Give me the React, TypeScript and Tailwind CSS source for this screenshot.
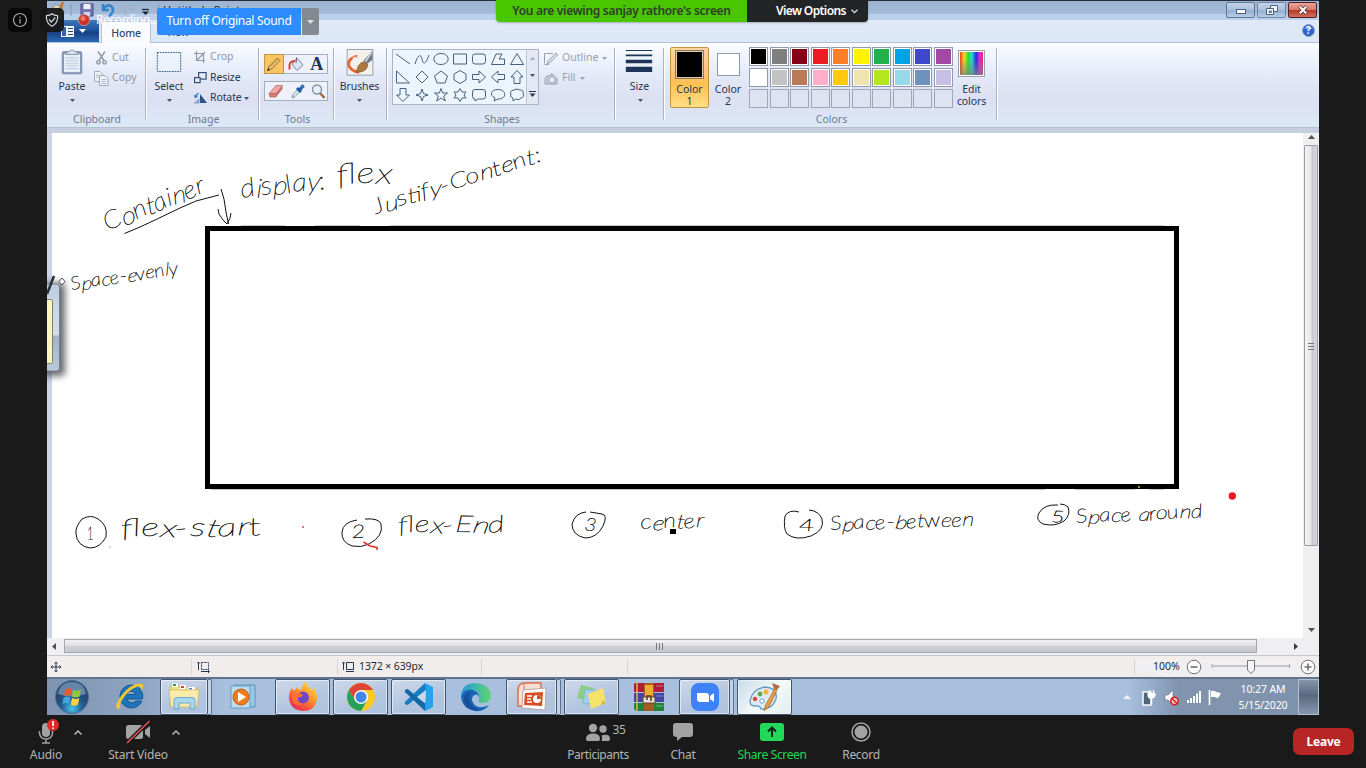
import React from "react";

const INK = "#111111";

/* ---------- ribbon helpers ---------- */

function Group({ label, className, children }: { label: string; className: string; children: React.ReactNode }) {
  return (
    <section className={`relative flex h-full shrink-0 flex-col ${className}`}>
      <div className="flex h-[68px] shrink-0">{children}</div>
      <div className="h-4 whitespace-nowrap text-center text-[10.5px] leading-4 text-[#6b7a93]">{label}</div>
      <div className="absolute right-0 top-[5px] h-[72px] w-[2px] border-l border-[#a9b3c6] bg-white" />
    </section>
  );
}

function Down({ color = "#44546e" }: { color?: string }) {
  return (
    <svg width="5" height="3" viewBox="0 0 5 3" className="shrink-0">
      <path d="M0 0H5L2.5 3Z" fill={color} />
    </svg>
  );
}

function PasteIcon() {
  return (
    <svg width="24" height="30" viewBox="0 0 24 30">
      <rect x="1" y="3" width="22" height="25" rx="1.5" fill="#8a9cba" stroke="#7386a6" />
      <rect x="3" y="6" width="18" height="20" fill="#e6edf7" />
      <path d="M5 10H19M5 13H19M5 16H19M5 19H19M5 22H19" stroke="#b7c6dc" />
      <path d="M6 3H9Q12-1 15 3H18V6H6Z" fill="#dfe6f0" stroke="#77879f" />
    </svg>
  );
}

function CutIcon() {
  return (
    <svg width="11" height="14" viewBox="0 0 11 14" fill="none" stroke="#8f98a8" strokeWidth="1.4">
      <path d="M2 0.5L8 9.5M9 0.5L3 9.5" />
      <circle cx="2.5" cy="11.3" r="1.7" />
      <circle cx="8.5" cy="11.3" r="1.7" />
    </svg>
  );
}

function CopyIcon() {
  return (
    <svg width="15" height="15" viewBox="0 0 15 15" fill="#eef1f8" stroke="#a3acbd">
      <path d="M0.5 0.5H6L8.5 3V10.5H0.5Z" />
      <path d="M5.5 4.5H11L14 7.5V14.5H5.5Z" />
      <path d="M2 4H5M2 6H5M7.5 8.5H12M7.5 10.5H12M7.5 12.5H12" stroke="#b5bccb" />
    </svg>
  );
}

function CropIcon() {
  return (
    <svg width="12" height="12" viewBox="0 0 12 12" fill="none" stroke="#8f98a8" strokeWidth="1.2">
      <path d="M2.5 0V9.5H11M0 2.5H9.5V12M2.5 9.5L11 1" />
    </svg>
  );
}

function ResizeIcon() {
  return (
    <svg width="13" height="12" viewBox="0 0 13 12" fill="#e8eef8" stroke="#2f4f7c" strokeWidth="1.2">
      <rect x="4.6" y="0.6" width="7.5" height="6.5" />
      <rect x="0.6" y="5.6" width="5.5" height="5" />
    </svg>
  );
}

function RotateIcon() {
  return (
    <svg width="14" height="12" viewBox="0 0 14 12">
      <path d="M6 11V2L13 11Z" fill="#2c5484" />
      <path d="M5 11V7L0.5 11Z" fill="#9bb6d8" stroke="#5d82b0" strokeWidth="0.6" />
      <path d="M1.5 5Q2 1.5 5 1.5M0 3L1.5 5.5L3.5 3.5" fill="none" stroke="#2a7bc8" strokeWidth="1.1" />
    </svg>
  );
}

function PencilIcon() {
  return (
    <svg width="16" height="16" viewBox="0 0 16 16">
      <path d="M1.5 14.5L3 10.5L11.5 2L14 4.5L5.5 13Z" fill="#f8d070" stroke="#6f5a33" strokeWidth="0.9" />
      <path d="M4 11.5L12.5 3" stroke="#b9852b" />
      <path d="M1 15L2.3 12L4 13.7Z" fill="#333" />
    </svg>
  );
}

function BucketIcon() {
  return (
    <svg width="16" height="15" viewBox="0 0 16 15">
      <path d="M5 5L9.5 1.5L15 8L9 13.5L4.5 8Z" fill="#dce5ef" stroke="#77879a" />
      <path d="M8 6L8.5 0.5" stroke="#556" />
      <path d="M7 4Q2 4 1.5 8V12.5" fill="none" stroke="#d8432e" strokeWidth="2" />
    </svg>
  );
}

function EraserIcon() {
  return (
    <svg width="16" height="14" viewBox="0 0 16 14">
      <path d="M1 9.5L8 1.5H14.5L8 9.5Z" fill="#f1a9a5" stroke="#a8625f" strokeWidth="0.7" />
      <path d="M1 9.5H8V13H2Z" fill="#dc7b78" stroke="#a8625f" strokeWidth="0.7" />
      <path d="M8 9.5L14.5 1.5V5L8 13Z" fill="#c96a69" />
    </svg>
  );
}

function DropperIcon() {
  return (
    <svg width="14" height="15" viewBox="0 0 14 15">
      <path d="M1 14L2 10.5L7.5 5L9.5 7L4 12.5Z" fill="#dcecf8" stroke="#70849c" strokeWidth="0.9" />
      <path d="M6 4L10 8M8.5 6L12 2" stroke="#1f5ba0" strokeWidth="3" />
      <circle cx="11.5" cy="2.5" r="2" fill="#2f76be" />
    </svg>
  );
}

function LensIcon() {
  return (
    <svg width="15" height="15" viewBox="0 0 15 15">
      <path d="M9 9L13.5 14" stroke="#9a6a48" strokeWidth="2.4" />
      <circle cx="6" cy="5.5" r="4.5" fill="#e5f0fb" stroke="#8490a0" strokeWidth="1.4" />
    </svg>
  );
}

function BrushIcon() {
  return (
    <svg width="30" height="30" viewBox="0 0 30 30">
      <rect x="0.5" y="0.5" width="29" height="29" fill="#f3f1ee" stroke="#8c96a4" />
      <path d="M6 10Q0 15 3 20T14 26.5" fill="none" stroke="#ea6233" strokeWidth="3" />
      <path d="M5 11.5Q8 7.500 11 7.500V9.500" fill="none" stroke="#ea6233" strokeWidth="1.5" />
      <path d="M29 2V12L23 17L19 13Z" fill="#727b86" />
      <path d="M28 4L21 14" stroke="#cfd4da" strokeWidth="2" />
      <path d="M11 26Q12 16 20 14L24 18Q22 27 11 26Z" fill="#ad7740" stroke="#7e4d22" strokeWidth="0.7" />
    </svg>
  );
}

const SHAPES = [
  "M1 2L15 12",
  "M1 12C4 2 7 2 8 7S11 14 15 3",
  "M8 1.5C17.5 1.5 17.5 12.5 8 12.5S-1.5 1.5 8 1.5Z",
  "M1.5 2H14.5V12H1.5Z",
  "M4 2H12Q14.5 2 14.5 4.5V9.5Q14.5 12 12 12H4Q1.5 12 1.5 9.5V4.5Q1.5 2 4 2Z",
  "M1.5 12.5L6 2H12L9 7H14.5V12.5Z",
  "M8 1.5L14.5 12.5H1.5Z",
  "M1.5 1V13H14.5Z",
  "M8 1L14 7L8 13L2 7Z",
  "M8 1L14.5 6L12 13H4L1.5 6Z",
  "M8 0.5L14 4V10L8 13.5L2 10V4Z",
  "M1.5 4.5H8V1L14.5 7L8 13V9.5H1.5Z",
  "M14.5 4.5H8V1L1.5 7L8 13V9.5H14.5Z",
  "M8 0.5L14 7H11V13.5H5V7H2Z",
  "M8 13.5L14.5 7H11V0.5H5V7H1.5Z",
  "M8 1L9.5 5.5L14 7L9.5 8.5L8 13L6.5 8.5L2 7L6.5 5.5Z",
  "M8 0.5L9.6 5H14.5L10.7 8L12.3 13L8 10L3.7 13L5.3 8L1.5 5H6.4Z",
  "M8 0.5L10 4H14L12 7L14 10H10L8 13.5L6 10H2L4 7L2 4H6Z",
  "M4 1.5H12Q14.5 1.5 14.5 4V8.5Q14.5 11 12 11H7L4 13V11Q1.5 11 1.5 8.5V4Q1.5 1.5 4 1.5Z",
  "M8 1.5C17 1.5 17 11 8 11L4 13L5 10C-1 7 1 1.5 8 1.5Z",
  "M5 2Q8 0 11 2Q15 2 14 5Q16 9 12 10Q10 13 7 11L4 13V10Q0 9 2 6Q0 3 5 2Z",
];

const PALETTE = [
  "bg-[#000000]", "bg-[#7f7f7f]", "bg-[#880015]", "bg-[#ed1c24]", "bg-[#ff7f27]",
  "bg-[#fff200]", "bg-[#22b14c]", "bg-[#00a2e8]", "bg-[#3f48cc]", "bg-[#a349a4]",
  "bg-[#ffffff]", "bg-[#c3c3c3]", "bg-[#b97a57]", "bg-[#ffaec9]", "bg-[#ffc90e]",
  "bg-[#efe4b0]", "bg-[#b5e61d]", "bg-[#99d9ea]", "bg-[#7092be]", "bg-[#c8bfe7]",
];

function Palette() {
  return (
    <div className="ml-[2px] mt-[4px] grid h-[60px] grid-cols-10 gap-x-[1.5px] gap-y-[2px]">
      {PALETTE.map((c) => (
        <div key={c} className="h-[19px] w-[19px] border border-[#9299a8] bg-white p-[1px]">
          <div className={`h-full w-full ${c}`} />
        </div>
      ))}
      {Array.from({ length: 10 }, (_, i) => (
        <div key={i} className="h-[19px] w-[19px] border border-[#a0a6b6] bg-[#dfe2f0]" />
      ))}
    </div>
  );
}

function Ribbon() {
  return (
    <div className="flex h-[85px] shrink-0 border-b border-[#b4bfd0] bg-[linear-gradient(#fafcff,#e5ebf8_35%,#dce0f2_65%,#dce8f6)]">
      <Group label="Clipboard" className="w-[100px]">
        <div className="ml-[9px] flex w-[32px] flex-col items-center pt-[6px] text-[10.5px] leading-4 text-[#26364f]">
          <PasteIcon />
          <span className="mt-[2px]">Paste</span>
          <span className="mt-[3px] flex h-4 items-start pt-[2px]"><Down /></span>
        </div>
        <div className="ml-[6px] flex flex-col pt-[5px] text-[10.5px] text-[#8d96a8]">
          <div className="flex h-5 items-center gap-[5px] pl-[2px]"><CutIcon />Cut</div>
          <div className="flex h-5 items-center gap-[3px]"><CopyIcon />Copy</div>
        </div>
      </Group>
      <Group label="Image" className="w-[113px]">
        <div className="ml-[6px] flex w-[32px] flex-col items-center pt-[9px] text-[10.5px] leading-4 text-[#26364f]">
          <svg width="28" height="23" viewBox="0 0 28 23"><rect x="0.5" y="0.5" width="27" height="22" fill="#ecf2fc" stroke="#1d4a77" strokeDasharray="2 1" /></svg>
          <span className="mt-[6px]">Select</span>
          <span className="mt-[3px] flex h-4 items-start pt-[2px]"><Down /></span>
        </div>
        <div className="ml-[9px] flex flex-col pt-[4px] text-[10.5px] text-[#26364f]">
          <div className="flex h-5 items-center gap-[4px] text-[#8d96a8]"><CropIcon />Crop</div>
          <div className="flex h-[21px] items-center gap-[3px] tracking-[-0.1px]"><ResizeIcon />Resize</div>
          <div className="flex h-5 items-center gap-[2px] tracking-[-0.1px]"><RotateIcon />Rotate<Down /></div>
        </div>
      </Group>
      <Group label="Tools" className="w-[75px]">
        <div className="ml-[4px] flex flex-col gap-[7px] pt-[11px]">
          <div className="flex h-5 w-16 border border-[#a5aebf] bg-[#eef1f9]">
            <div className="-m-px flex w-[21px] items-center justify-center border border-[#c29746] bg-[#fbc463]"><PencilIcon /></div>
            <div className="ml-[2px] flex w-[22px] items-center justify-center"><BucketIcon /></div>
            <div className="flex w-[21px] items-center justify-center font-['Liberation_Serif',serif] text-[18px] font-bold text-[#20344f]">A</div>
          </div>
          <div className="flex h-5 w-16 items-center justify-between border border-[#a5aebf] bg-[#eef1f9] pl-[3px] pr-px">
            <EraserIcon /><DropperIcon /><LensIcon />
          </div>
        </div>
      </Group>
      <Group label="" className="w-[53px]">
        <div className="flex w-[49px] flex-col items-center pt-[6px] text-[10.5px] leading-4 text-[#26364f]">
          <BrushIcon />
          <span className="mt-[2px] tracking-[-0.1px]">Brushes</span>
          <span className="mt-[3px] flex h-4 items-start pt-[2px]"><Down /></span>
        </div>
      </Group>
      <Group label="Shapes" className="w-[228px]">
        <div className="ml-[4px] mt-[6px] flex h-[56px] w-[147px] border border-[#a9b4c8] bg-[#edf5fc]">
          <div className="grid w-[133px] grid-cols-7 items-center">
            {SHAPES.map((d) => (
              <svg key={d} width="16" height="14" viewBox="0 0 16 14" fill="none" stroke="#3d5878" strokeWidth="0.95" className="ml-[2px]"><path d={d} /></svg>
            ))}
          </div>
          <div className="flex flex-1 flex-col items-center justify-around border-l border-[#bcc6d8] bg-[#e3e8f4]">
            <svg width="5" height="3" viewBox="0 0 5 3"><path d="M0 3H5L2.5 0Z" fill="#a5adbd" /></svg>
            <Down />
            <svg width="7" height="6" viewBox="0 0 7 6"><path d="M0 0.5H7" stroke="#2c3c56" /><path d="M0.5 2.5H6.5L3.5 6Z" fill="#2c3c56" /></svg>
          </div>
        </div>
        <div className="ml-[5px] flex flex-col pt-[5px] text-[10.5px] text-[#98a1b4]">
          <div className="flex h-5 items-center gap-[4px]">
            <svg width="14" height="13" viewBox="0 0 14 13" fill="none" stroke="#9aa2b2"><path d="M0.5 11.5V1.5H9M0.5 12.5H5" /><path d="M3 12L4.5 8.5L12 1L13.5 3L6 10.5Z" fill="#d9deea" /></svg>
            Outline<Down color="#98a1b4" />
          </div>
          <div className="flex h-5 items-center gap-[4px]">
            <svg width="14" height="13" viewBox="0 0 14 13" fill="#c4cad8" stroke="#9aa2b2"><path d="M1 12V7Q2 3 5 4L8 1.5L13 6.5V12Z" /><path d="M4 8L8 4L12 8L8 11.5Z" fill="#e6e9f2" /></svg>
            Fill<Down color="#98a1b4" />
          </div>
        </div>
      </Group>
      <Group label="" className="w-[49px]">
        <div className="flex w-[48px] flex-col items-center pt-[7px] text-[10.5px] leading-4 text-[#26364f]">
          <svg width="30" height="27" viewBox="0 0 30 27" fill="#1e3558" className="mr-[2px]"><path d="M0 0H30V1H0ZM0 5H30V7H0ZM0 11H30V15H0ZM0 19H30V25H0Z" /></svg>
          <span className="mr-px mt-[4px]">Size</span>
          <span className="mt-[3px] flex h-4 items-start pt-[2px]"><Down /></span>
        </div>
      </Group>
      <Group label="Colors" className="w-[333px]">
        <div className="ml-[5px] mt-[4px] flex h-[61px] w-[39px] shrink-0 flex-col items-center rounded-[2px] border border-[#c2923f] bg-[linear-gradient(#fbd6a0,#fcc573_45%,#fdc052_60%,#fedf86)] pt-[2px] text-[10.5px] leading-[12px] text-[#26364f]">
          <div className="h-[29px] w-[29px] border border-[#8d7660] bg-[#e4cba8] p-px"><div className="h-full w-full bg-black" /></div>
          <span className="mt-[4px]">Color</span>
          <span>1</span>
        </div>
        <div className="flex w-[38px] shrink-0 flex-col items-center pt-[10px] text-[10.5px] leading-[12px] text-[#26364f]">
          <div className="h-[23px] w-[23px] border border-[#8f98a8] bg-white" />
          <span className="mt-[7px]">Color</span>
          <span>2</span>
        </div>
        <Palette />
        <div className="ml-[1px] flex w-[36px] flex-col items-center pt-[7px] text-[10.5px] leading-[12px] tracking-[-0.1px] text-[#26364f]">
          <div className="h-[27px] w-[27px] border border-[#9a9fae] bg-white p-px">
            <div className="h-full w-full bg-[linear-gradient(180deg,transparent_30%,rgba(128,128,128,.75)),linear-gradient(90deg,#f43b20,#f1dc20_18%,#22df2d_36%,#26d8df_52%,#2827df_70%,#ea26d9_86%,#f02460)]" />
          </div>
          <span className="mt-[6px]">Edit</span>
          <span>colors</span>
        </div>
      </Group>
    </div>
  );
}

/* ---------- title bar and tabs ---------- */

function TitleBar() {
  return (
    <div className="flex h-5 shrink-0 items-start border-t border-[#252b3c] bg-[linear-gradient(#9db5d3,#a3bad6_65%,#b9cfea_70%,#bcd0ec)] pl-[2px]">
      <svg width="114" height="19" viewBox="49 1 114 19" className="shrink-0">
        <path d="M50 14L55 4L62 7L64 14Z" fill="#ddd2bb" stroke="#8a8f9c" /><path d="M58 14L63 2" stroke="#c57425" strokeWidth="2.5" />
        <path d="M71 4V16" stroke="#8696b4" />
        <path d="M81 4H93V16H81Z" fill="#7975b8" stroke="#484a87" /><path d="M83.5 4H90.5V9H83.5Z" fill="#eef0fa" /><path d="M84 12H90V16H84Z" fill="#d3d5ee" />
        <path d="M103 4V10H109M103.5 9Q108 3 112 7Q115 12 109 16" fill="none" stroke="#3585cd" strokeWidth="2.6" />
        <path d="M134 4V9H128M133 8Q129 4 125 7Q121 11 127 15" fill="none" stroke="#a5b2ca" strokeWidth="2.2" />
        <path d="M142 9.5H149" stroke="#1d2636" strokeWidth="1.3" /><path d="M142 11.5H149L145.5 15Z" fill="#1d2636" />
        <path d="M158.5 4V16" stroke="#8696b4" />
      </svg>
      <span className="whitespace-nowrap text-[11px] leading-[18px] text-[#222b3c]">Untitled - Paint</span>
      <div className="ml-auto mr-[2px] mt-[1px] flex gap-[2px]">
        <div className="flex h-4 w-[29px] items-center justify-center rounded-[2px] border border-[#5f7596] bg-[linear-gradient(#c3d4e8,#a9bfdb_50%,#94afd0_52%,#b6cbe4)]">
          <div className="mt-[3px] h-[5px] w-[10px] border border-[#4f617c] bg-white" />
        </div>
        <div className="flex h-4 w-[29px] items-center justify-center rounded-[2px] border border-[#7187a7] bg-[linear-gradient(#c3d4e8,#a9bfdb_50%,#94afd0_52%,#b6cbe4)]">
          <svg width="12" height="10" viewBox="0 0 12 10" fill="#eef3f9" stroke="#4f617c"><path d="M4.5 0.5H11.5V6.5H4.5Z" /><path d="M0.5 3.5H7.5V9.5H0.5Z" /><path d="M3 6H5.5V7.5H3Z" fill="#9cb3cf" strokeWidth="0.8" /></svg>
        </div>
        <div className="flex h-4 w-[29px] items-center justify-center rounded-[2px] border border-[#521f27] bg-[linear-gradient(#e9a69b,#d9796b_48%,#b63a26_52%,#d3705f)]">
          <svg width="12" height="10" viewBox="0 0 12 10"><path d="M2.5 1.5L9.5 8.5M9.5 1.5L2.5 8.5" stroke="#5c2b2b" strokeWidth="3.6" /><path d="M2.8 1.8L9.2 8.2M9.2 1.8L2.8 8.2" stroke="#fff" strokeWidth="2.1" /></svg>
        </div>
      </div>
    </div>
  );
}

function TabRow() {
  return (
    <div className="flex h-[23px] shrink-0 border-b border-[#b2c0d6] bg-[linear-gradient(#e0e8f7,#dce8f7)]">
      <div className="flex h-[22px] w-[52px] items-center justify-center gap-[5px] bg-[linear-gradient(#3e78bb,#1f4f97_50%,#173f83_55%,#2c69b0)]">
        <svg width="13" height="11" viewBox="0 0 13 11"><path d="M0 0H13V11H0Z" fill="#f3f7fc" /><path d="M1 1H5V10H1Z" fill="#33649f" /><path d="M7 2.5H12M7 5.5H12M7 8.5H12" stroke="#27466e" /></svg>
        <svg width="7" height="4" viewBox="0 0 7 4"><path d="M0 0H7L3.5 4Z" fill="#fff" /></svg>
      </div>
      <div className="ml-[2px] mt-[1px] flex h-[22px] w-[50px] items-center justify-center rounded-t-[3px] border border-b-0 border-[#b6c2d8] bg-[#f9fbff] pt-[2px] text-[10.5px] font-medium tracking-[-0.15px] text-[#30496d]">Home</div>
      <div className="flex h-[23px] w-[53px] items-center justify-center pt-[3px] text-[10.5px] text-[#30496d]">View</div>
      <svg width="13" height="13" viewBox="0 0 13 13" className="ml-auto mr-[4px] mt-[4px]">
        <circle cx="6.5" cy="6.5" r="5.9" fill="#2962cf" stroke="#8796b4" />
        <path d="M2 5Q6 0 11 5Z" fill="#7ca8ee" />
        <text x="6.5" y="10" fontSize="10" fontWeight="700" fill="#fff" textAnchor="middle">?</text>
      </svg>
    </div>
  );
}

/* ---------- the drawing on the canvas ---------- */

type Note = { t: string; x: number; y: number; w: number; a: number; s: number };

const NOTES: Note[] = [
  { t: "Container", x: 108, y: 231, w: 106, a: -22, s: 25 },
  { t: "display:", x: 242, y: 198, w: 85, a: -7, s: 26 },
  { t: "flex", x: 338, y: 185, w: 54, a: -3, s: 29 },
  { t: "Justify-Content:", x: 376, y: 214, w: 175, a: -18, s: 21 },
  { t: "Space-evenly", x: 72, y: 290, w: 108, a: -9, s: 18 },
  { t: "flex-start", x: 122, y: 537, w: 141, a: -1, s: 25 },
  { t: "flex-End", x: 399, y: 533, w: 106, a: -1, s: 23 },
  { t: "center", x: 641, y: 529, w: 63, a: -2, s: 20 },
  { t: "Space-between", x: 831, y: 530, w: 143, a: -2, s: 19 },
  { t: "Space around", x: 1077, y: 523, w: 126, a: -3, s: 19 },
  { t: "1", x: 87, y: 540, w: 7, a: 0, s: 18 },
  { t: "2", x: 352, y: 538, w: 14, a: 0, s: 18 },
  { t: "3", x: 584, y: 530, w: 12, a: 12, s: 18 },
  { t: "4", x: 799, y: 531, w: 16, a: 3, s: 17 },
  { t: "5", x: 1051, y: 522, w: 14, a: 5, s: 16 },
];

// Uneven letter angles and baselines, so that the notes read as quick pen writing.
const TILT = [-5, 7, -3, 5, -8, 3, 9, -4, 2, -6, 6, -2, 4, -5, 3, 0];
const BOB = [0, 1.2, -1.6, 0.9, 0.7, -1.4, 0.8, 0.6, -1.1, 0.9, -0.7, 1, -1.2, 0.6, 0.4, -0.5];

function Canvas() {
  return (
    <svg width="1256" height="505" viewBox="47 133 1256 505" className="shrink-0 bg-white">
      <defs>
        <linearGradient id="glass" x1="0" y1="0" x2="0" y2="1">
          <stop offset="0" stopColor="#bdcedf" /><stop offset="0.58" stopColor="#d4deea" /><stop offset="0.6" stopColor="#9fb3c7" /><stop offset="1" stopColor="#bacbdc" />
        </linearGradient>
        <filter id="soft" x="-100%" y="-20%" width="300%" height="140%"><feGaussianBlur stdDeviation="3.5" /></filter>
      </defs>
      <rect x="47" y="133" width="5" height="505" fill="#cdd2e5" />
      <rect x="40" y="283" width="25" height="93" rx="4" fill="#33363c" opacity="0.75" filter="url(#soft)" />
      <rect x="38" y="284" width="21.5" height="87" rx="3" fill="url(#glass)" stroke="#6e8092" />
      <rect x="40" y="299.5" width="12.5" height="64" rx="2" fill="#fbf5bd" stroke="#7d7e68" />
      <path d="M47 294L54 276" stroke="#293040" strokeWidth="2.5" />
      <path d="M62 278L65 281.5L62 285L59 281.5Z" fill="#fff" stroke="#222" strokeWidth="0.8" />

      <rect x="207.5" y="228.5" width="969" height="258" fill="none" stroke="#000" strokeWidth="5" />
      <path d="M211 489.5H1045M1075 489.5H1135M1149 489.5H1164" stroke="#c6c6c6" />
      <path d="M241 225.5H285M315 225.5H360M390 225.5H1164" stroke="#c9c9c9" />
      <rect x="1138" y="486" width="2" height="2" fill="#8f9137" />

      <g fill="none" stroke={INK} strokeWidth="1">
        <path d="M124.5 233.5L140 227L155 220L180 208L196 201L219 195" />
        <path d="M221 189L224 199L226 212L228.5 224M218 209L219 214L223 220L227 224L230 218L231 213" />
        <path d="M82 519Q91 514 98 519Q108 525 106 537Q100 548 90 548Q77 546 76 534Q75 527 82 519" />
        <path d="M357 520Q343 522 342 532Q341 542 352 546Q361 548 369 544Q384 536 381 524Q379 518 365 519" />
        <path d="M586 512Q575 513 572 524Q572 535 585 538Q597 538 603 526Q608 515 602 514L590 512" />
        <path d="M799 512Q789 509 785 516Q783 528 787 534Q796 541 811 536Q825 530 822 519Q819 511 809 510" />
        <path d="M1058 505Q1044 504 1039 513Q1035 520 1043 524Q1055 527 1064 521Q1071 515 1068 507Q1065 504 1060 504" />
      </g>
      {NOTES.map((n) => (
        <text
          key={n.t}
          transform={`translate(${n.x} ${n.y}) rotate(${n.a})`}
          fontSize={n.s}
          textLength={n.w}
          lengthAdjust="spacingAndGlyphs"
          rotate={TILT.slice(0, n.t.length).join(" ")}
          dy={BOB.slice(0, n.t.length).join(" ")}
          fill={INK}
          stroke={INK}
          strokeWidth="0.45"
          className="font-['Lato',sans-serif] font-thin italic"
        >
          {n.t}
        </text>
      ))}
      <rect x="670" y="529" width="6" height="5" fill="#000" />
      <path d="M363.5 542L370 546L377 547.5V550" fill="none" stroke="#e3322b" strokeWidth="1.6" />
      <circle cx="303" cy="527" r="1" fill="#d84d64" />
      <circle cx="110" cy="547" r="0.7" fill="#a88" />
      <circle cx="1232.3" cy="496" r="3.7" fill="#f3161b" />
    </svg>
  );
}

function VScroll() {
  return (
    <div className="flex w-4 shrink-0 flex-col items-center bg-[#efeff2]">
      <svg width="7" height="4" viewBox="0 0 7 4" className="mb-[6px] mt-[2px] shrink-0"><path d="M0 4H7L3.5 0Z" fill="#4c5059" /></svg>
      <div className="flex h-[401px] w-[14px] shrink-0 items-center justify-center rounded-[1px] border border-[#999ca3] bg-[linear-gradient(90deg,#f6f6f6,#e5e5e8_50%,#cacbd0_60%,#d6d7dc)]">
        <svg width="6" height="8" viewBox="0 0 6 8"><path d="M0 1.5H6M0 4.5H6M0 7.5H6" stroke="#747983" /></svg>
      </div>
      <svg width="7" height="4" viewBox="0 0 7 4" className="mb-[6px] mt-auto"><path d="M0 0H7L3.5 4Z" fill="#4c5059" /></svg>
    </div>
  );
}

function HScroll() {
  return (
    <div className="flex h-[17px] shrink-0 items-center bg-[#efeff1] pb-px pl-[5px]">
      <svg width="4" height="7" viewBox="0 0 4 7" className="mr-[8px]"><path d="M4 0V7L0 3.5Z" fill="#4c5059" /></svg>
      <div className="flex h-[14px] w-[1193px] items-center justify-center border border-[#a5a7ad] bg-[linear-gradient(#f1f1f3,#e3e3e6_45%,#cfcfd4_50%,#c8c9cf)]">
        <svg width="8" height="7" viewBox="0 0 8 7" className="mr-[3px]"><path d="M1.5 0V7M4.5 0V7M7.5 0V7" stroke="#747983" /></svg>
      </div>
      <svg width="4" height="7" viewBox="0 0 4 7" className="ml-[37px]"><path d="M0 0V7L4 3.5Z" fill="#333b47" /></svg>
    </div>
  );
}

function StatusBar() {
  return (
    <div className="flex h-[22px] shrink-0 items-center border-t border-[#c6c8ce] bg-[#f2eded] text-[10.5px] text-[#222831]">
      <div className="flex h-4 w-[145px] items-center border-r border-[#d8d5d8] pl-[3px]">
        <svg width="12" height="12" viewBox="0 0 12 12" fill="none" stroke="#27364e" strokeWidth="1"><path d="M6 1V11M1 6H11M4.5 2.5L6 1L7.5 2.5M4.5 9.5L6 11L7.5 9.5M2.5 4.5L1 6L2.5 7.5M9.5 4.5L11 6L9.5 7.5" /></svg>
      </div>
      <div className="flex h-4 w-[146px] items-center border-r border-[#d8d5d8] pl-[5px]">
        <svg width="14" height="12" viewBox="0 0 14 12" fill="none" stroke="#27364e"><path d="M1.5 9V1M0 2.5L1.5 1L3 2.5" /><path d="M4.5 1.5H11.5V8.5H4.5Z" strokeDasharray="2 1" /><path d="M4 10.5H12M11 9L12.5 10.5L11 12" /></svg>
      </div>
      <div className="flex h-4 w-[144px] items-center gap-[4px] border-r border-[#d8d5d8] pl-[4px]">
        <svg width="13" height="12" viewBox="0 0 13 12" fill="none" stroke="#27364e"><path d="M1.5 9V1M0 2.5L1.5 1L3 2.5M4.5 1.5H11.5V8.5H4.5ZM4 10.5H12" /></svg>
        <span className="whitespace-nowrap tracking-[-0.1px]">1372 × 639px</span>
      </div>
      <div className="h-4 w-[146px] border-r border-[#d8d5d8]" />
      <div className="h-4 w-[507px] border-r border-[#d8d5d8]" />
      <div className="flex flex-1 items-center bg-[#efeff2] pl-[18px]">
        <span className="w-[33px]">100%</span>
        <svg width="16" height="16" viewBox="0 0 16 16" fill="#fafafa" stroke="#6d7077"><circle cx="8" cy="8" r="6.8" /><path d="M4.5 8H11.5" strokeWidth="1.6" /></svg>
        <svg width="80" height="16" viewBox="0 0 80 16" className="ml-[9px]"><path d="M1 7H79" stroke="#999ba1" /><path d="M1 5V9M78.5 5V9" stroke="#aaa" /><path d="M36.5 1.5H43.5V11L40 14.5L36.5 11Z" fill="#f6f6f7" stroke="#71757d" /></svg>
        <svg width="16" height="16" viewBox="0 0 16 16" fill="#fafafa" stroke="#6d7077" className="ml-[9px] shrink-0"><circle cx="8" cy="8" r="6.8" /><path d="M4.5 8H11.5M8 4.5V11.5" strokeWidth="1.6" /></svg>
      </div>
    </div>
  );
}

/* ---------- taskbar ---------- */

function StartOrb() {
  return (
    <svg width="36" height="36" viewBox="0 0 36 36">
      <defs><radialGradient id="orb" cx="50%" cy="85%"><stop offset="0" stopColor="#48c3e8" /><stop offset="0.6" stopColor="#23639b" /><stop offset="1" stopColor="#244974" /></radialGradient></defs>
      <circle cx="18" cy="18" r="16.5" fill="url(#orb)" stroke="#51708f" />
      <path d="M4 15Q6 3 18 3T32 15Q18 20 4 15Z" fill="#9ab8d3" opacity="0.55" />
      <path d="M11 11Q14 8 17.5 10L16.5 17Q13 15 10 17Z" fill="#e75a28" />
      <path d="M19 10.5Q23 13 27 10.5L25.5 17.5Q22 19.5 18 17.5Z" fill="#8fc83f" />
      <path d="M9.5 18.5Q13 16.5 16.3 18.5L15 25Q12 23 8.5 25Z" fill="#46a4e0" />
      <path d="M18 19Q22 21 25.3 19L24 25.5Q20 28 16.8 25.5Z" fill="#ffd23e" />
    </svg>
  );
}

function IEIcon() {
  return (
    <svg width="32" height="32" viewBox="0 0 32 32">
      <path fillRule="evenodd" d="M17 4A11.5 11.5 0 1 0 28 20H21.5Q17 25 12.5 18H28.5A11.5 11.5 0 0 0 17 4ZM12.5 13.5Q17 6.5 21.5 13.5Z" fill="#1d74b8" stroke="#14598f" />
      <path d="M4 28Q-1 27 7 15Q17 2 27 2.5Q32 4 27 10Q29 5 24 5.5Q15 8 8 19Q4 26 7 27Z" fill="#f1c631" />
    </svg>
  );
}

function ExplorerIcon() {
  return (
    <svg width="32" height="30" viewBox="0 0 32 30">
      <path d="M2 4H11L13 6H29V23H2Z" fill="#f2dc83" stroke="#c8a94f" strokeWidth="0.7" />
      <path d="M4 1.5H10V5H4ZM12 3H18V7H12ZM20 5H27V8H20Z" fill="#fff" />
      <path d="M5 2H8V4H5Z" fill="#35a243" /><path d="M13 4H16V6H13Z" fill="#d6462e" /><path d="M21 6H24V7.5H21Z" fill="#3f8fce" />
      <path d="M1 8H31L29 25H3Z" fill="#faecaa" stroke="#d1b663" strokeWidth="0.7" />
      <path d="M6 27V18Q6 15.5 9 15.5H24Q27 15.5 27 18V27H22V21H11V27Z" fill="#a9d7ef" stroke="#579cc4" strokeWidth="0.8" />
    </svg>
  );
}

function MediaIcon() {
  return (
    <svg width="26" height="26" viewBox="0 0 26 26">
      <path d="M4 1H25V23H21Z" fill="#9ac9e7" stroke="#5b94bc" /><path d="M1 2H20V24H1Z" fill="#bcdcf0" stroke="#649bc3" />
      <circle cx="11" cy="13" r="8" fill="#ed7c1d" stroke="#d25e0d" /><path d="M8 8L16 13L8 18Z" fill="#fff" />
    </svg>
  );
}

function FirefoxIcon() {
  return (
    <svg width="30" height="30" viewBox="0 0 30 30">
      <defs><linearGradient id="ff" x1="1" y1="0" x2="0.3" y2="1"><stop offset="0" stopColor="#fff04a" /><stop offset="0.5" stopColor="#ff9329" /><stop offset="1" stopColor="#ed2753" /></linearGradient></defs>
      <path d="M18 0Q20 6 25 8L26 5Q29 10 29 16Q28 29 15 29Q2 28 1 16Q1 9 4 6L6 9L9 5Q10 8 13 8Q14 2 18 0Z" fill="url(#ff)" />
      <circle cx="15" cy="15.5" r="6" fill="#7047c9" /><path d="M4 13Q10 9 15 13Q13 16 10 15Q9 21 15 22Q9 25 5 20Z" fill="#ff7130" />
    </svg>
  );
}

function ChromeIcon() {
  return (
    <svg width="30" height="30" viewBox="0 0 30 30">
      <circle cx="15" cy="15" r="14" fill="#fbc928" />
      <path d="M2.9 8A14 14 0 0 1 27.1 8H15L9 18.5Z" fill="#df4537" />
      <path d="M2.9 8A14 14 0 0 0 15 29L21.1 18.5L15 15L9 18.5Z" fill="#27a159" />
      <circle cx="15" cy="15" r="7" fill="#f7f9f8" /><circle cx="15" cy="15" r="5.5" fill="#4285ea" />
    </svg>
  );
}

function CodeIcon() {
  return (
    <svg width="30" height="30" viewBox="0 0 30 30">
      <path d="M21 1L3 18Q0 20 1 22L3 23Q4 23 5 22L23 7Z" fill="#177cc0" />
      <path d="M21 29L3 12Q0 10 1 8L3 7Q4 7 5 8L23 23Z" fill="#1269a5" />
      <path d="M21 1L29 5V25L21 29V22L22 15V8Z" fill="#27a1eb" /><path d="M21 9V21L13 15Z" fill="#c6d8ed" />
    </svg>
  );
}

function EdgeIcon() {
  return (
    <svg width="32" height="30" viewBox="0 0 32 30">
      <defs><linearGradient id="ed"><stop offset="0" stopColor="#2598dd" /><stop offset="1" stopColor="#5ed671" /></linearGradient></defs>
      <path d="M1 14Q2 1 16 1Q29 2 31 13Q31 21 23 21Q17 21 19 17Q21 8 12 8Q4 8 1 14Z" fill="url(#ed)" />
      <path d="M1 14Q5 6 13 8Q20 10 19 16Q18 10 13 14Q10 19 16 24Q21 27 29 23Q24 30 15 29Q2 27 1 14Z" fill="#1766b4" />
      <path d="M4 20Q3 11 12 9Q8 13 9 18Q11 25 19 28Q9 30 4 20Z" fill="#1b4d98" />
    </svg>
  );
}

function PowerPointIcon() {
  return (
    <svg width="32" height="30" viewBox="0 0 32 30">
      <path d="M2 8Q2 1 9 1H25V19L18 24H2Z" fill="#f5dfd6" stroke="#db6b48" strokeWidth="1.4" /><path d="M8 2V22" stroke="#dd7858" />
      <path d="M7 8L30 6L29 28L6 26Z" fill="#fff" stroke="#b5a7a4" /><path d="M9 11L27 10L26 24L8 23Z" fill="#d64e24" />
      <path d="M11 14H16M11 17H15M11 20H16" stroke="#fff" strokeWidth="1.7" /><circle cx="21" cy="17" r="4" fill="#fff" /><path d="M21 17H25A4 4 0 0 0 21 13Z" fill="#d64e24" />
    </svg>
  );
}

function StickyIcon() {
  return (
    <svg width="32" height="28" viewBox="0 0 32 28">
      <path d="M5 2L18 5L14 19L1 15Z" fill="#8dce82" /><path d="M9 6L24 8L22 22L7 20Z" fill="#a1cfea" stroke="#76acd0" strokeWidth="0.6" />
      <path d="M12 11L27 5L30 20L15 26Z" fill="#f6e269" /><path d="M30 20L25 22L27 17Z" fill="#d3b83c" />
    </svg>
  );
}

function RarIcon() {
  return (
    <svg width="32" height="30" viewBox="0 0 32 30">
      <path d="M1 2Q1 1 3 1H31V10H1Z" fill="#b01e37" /><path d="M1 11H31V20H1Z" fill="#4546a4" /><path d="M1 21H31V29H3L1 27Z" fill="#23823a" />
      <path d="M4 1V10M4 11V20M4 21V29" stroke="#e7b731" strokeWidth="1.5" /><path d="M23 4H30M23 14H30M23 24H30" stroke="#fff" opacity="0.35" />
      <path d="M11 1H21V29H11Z" fill="#a65b22" /><path d="M12 3H20V15H12Z" fill="#efac2f" /><path d="M10 15H22V21H10Z" fill="#ece5d7" stroke="#604b37" /><path d="M14 18V14H18V19" fill="none" stroke="#5b4127" strokeWidth="1.6" />
    </svg>
  );
}

function ZoomIcon() {
  return (
    <svg width="28" height="30" viewBox="0 0 28 30">
      <rect x="0" y="1" width="28" height="28" rx="8" fill="#3f82f7" />
      <path d="M6 11H15Q18 11 18 14V20H9Q6 20 6 17Z" fill="#fff" /><path d="M19 14L23 11V20L19 17Z" fill="#fff" />
    </svg>
  );
}

function PaintIcon() {
  return (
    <svg width="34" height="32" viewBox="0 0 34 32">
      <path d="M2 20Q4 8 17 6Q30 7 28 18Q24 29 13 28Q12 24 7 25Q2 25 2 20Z" fill="#dfeaf4" stroke="#5f98be" strokeWidth="1.3" />
      <circle cx="7" cy="18" r="2.2" fill="#d94836" /><circle cx="12" cy="13" r="2.4" fill="#62a94d" /><circle cx="18" cy="11" r="2.5" fill="#efb530" /><circle cx="14" cy="20" r="2.2" fill="#fff" stroke="#67a2c9" />
      <path d="M16 30Q17 23 21 18L27 7L29 9L24 20Q21 27 16 30Z" fill="#e2a146" stroke="#a5632c" strokeWidth="0.7" /><path d="M24 2L32 5L29 9L26 8Z" fill="#ac6f49" />
    </svg>
  );
}

function Task({ className, frame = false, stack = false, active = false, children }: { className: string; frame?: boolean; stack?: boolean; active?: boolean; children: React.ReactNode }) {
  return (
    <div className={`flex h-[36px] shrink-0 ${className}`}>
      <div
        className={`flex flex-1 items-center justify-center rounded-[2px] ${
          frame ? "border border-[#41556f] shadow-[inset_0_0_0_1px_rgba(255,255,255,.55)]" : ""
        } ${active ? "bg-[linear-gradient(135deg,#c9dce8,#f3f9f9_55%,#dfeeed)]" : frame ? "bg-[linear-gradient(160deg,#ced9eb,#b2c5de_60%,#aec4df)]" : ""}`}
      >
        {children}
      </div>
      {stack && <div className="w-[4px] rounded-r-[2px] border border-l-0 border-[#5d7290] bg-[#c3d2e6]" />}
    </div>
  );
}

function Taskbar() {
  return (
    <div className="flex h-[38px] shrink-0 items-center border-t-2 border-[#61738d] bg-[linear-gradient(90deg,#7e93b0,#90a7c5_8%,#a8bfdd_14%,#a8bfdd_85%,#8094ae_89%,#7e92ab)]">
      <Task className="w-[50px]"><StartOrb /></Task>
      <Task className="ml-[8px] w-[50px]"><IEIcon /></Task>
      <Task className="ml-[5px] w-[52px]" frame stack><ExplorerIcon /></Task>
      <Task className="ml-[5px] w-[52px]"><MediaIcon /></Task>
      <Task className="ml-[6px] w-[55px]" frame><FirefoxIcon /></Task>
      <Task className="ml-[3px] w-[55px]" frame><ChromeIcon /></Task>
      <Task className="ml-[3px] w-[55px]" frame><CodeIcon /></Task>
      <Task className="ml-[3px] w-[54px]"><EdgeIcon /></Task>
      <Task className="ml-[3px] w-[55px]" frame stack><PowerPointIcon /></Task>
      <Task className="ml-[3px] w-[55px]" frame><StickyIcon /></Task>
      <Task className="ml-[3px] w-[54px]"><RarIcon /></Task>
      <Task className="ml-[3px] w-[55px]" frame stack><ZoomIcon /></Task>
      <Task className="ml-[3px] w-[55px]" frame active><PaintIcon /></Task>
      <div className="ml-auto flex h-full items-center">
        <svg width="104" height="20" viewBox="0 0 104 20" className="mr-[7px] mt-[2px]">
          <path d="M0 11H8L4 7Z" fill="#edf3f8" />
          <path d="M20 4H28V17H20Z" fill="#51647e" stroke="#f5f8fb" strokeWidth="1.6" /><path d="M26.5 2V6M30.5 2V6M28.5 10V16" fill="none" stroke="#fff" strokeWidth="1.4" /><path d="M24.5 5H32.500V8Q31 11 28.500 11Q25 11 24.500 8Z" fill="#fff" />
          <path d="M42 7H45L50 2V17L45 12H42Z" fill="#fff" stroke="#596a81" strokeWidth="0.6" /><circle cx="51.5" cy="13" r="3.7" fill="#f7c9c4" stroke="#d52022" strokeWidth="1.6" /><path d="M49 10.5L54 15.5" stroke="#d52022" strokeWidth="1.5" />
          <path d="M65 12V15M68 10V15M71 8V15M74 5.5V15M77 3V15" stroke="#fff" strokeWidth="2" />
          <path d="M86.5 2V17" stroke="#fff" strokeWidth="1.7" /><path d="M88 3Q92 2 93 4L98 5L96 9Q94 11 92 9H88Z" fill="#fff" />
        </svg>
        <div className="flex w-[58px] flex-col items-center whitespace-nowrap text-[10.5px] leading-4 tracking-[-0.1px] text-white">
          <span>10:27 AM</span><span>5/15/2020</span>
        </div>
        <div className="ml-[6px] h-[36px] w-[21px] border border-[#b2c0d1] bg-[linear-gradient(#8696aa,#59697f_45%,#8497ae)]" />
      </div>
    </div>
  );
}

/* ---------- meeting controls ---------- */

function MeetingBar() {
  return (
    <footer className="flex h-[53px] shrink-0 text-[12px] leading-4 tracking-[-0.3px] text-[#b5b5b5]">
      <div className="flex w-[92px] pl-[24px]">
        <div className="flex w-[44px] flex-col items-center pt-[4px]">
          <svg width="30" height="28" viewBox="31 719 30 28">
            <rect x="42" y="723" width="8" height="14" rx="4" fill="#a3a3a3" /><path d="M39.5 731V733Q40 739 46 739Q52 739 52.5 733V731M46 739V743M42 743H50" fill="none" stroke="#a3a3a3" strokeWidth="1.5" />
            <circle cx="53" cy="725" r="6" fill="#e32828" /><path d="M53 721V726M53 727.5V729" stroke="#fff" strokeWidth="1.7" />
          </svg>
          <span className="tracking-[-0.1px]">Audio</span>
        </div>
        <svg width="8" height="5" viewBox="0 0 8 5" className="ml-[6px] mt-[15px]"><path d="M0.5 4.5L4 1L7.5 4.5" fill="none" stroke="#b7b7b7" strokeWidth="1.5" /></svg>
      </div>
      <div className="flex w-[120px] pl-[14px]">
        <div className="flex w-[64px] flex-col items-center whitespace-nowrap pt-[4px]">
          <svg width="28" height="28" viewBox="125 719 28 28"><rect x="127" y="725" width="17" height="14" rx="2.5" fill="#a3a3a3" /><path d="M146 730L151 726V738L146 734Z" fill="#a3a3a3" /><path d="M128 743L150.5 721" stroke="#1a1a1a" strokeWidth="4" /><path d="M128 743L150.5 721" stroke="#ed5050" strokeWidth="1.5" /></svg>
          <span className="tracking-[-0.2px]">Start Video</span>
        </div>
        <svg width="8" height="5" viewBox="0 0 8 5" className="ml-[2px] mt-[15px]"><path d="M0.5 4.5L4 1L7.5 4.5" fill="none" stroke="#b7b7b7" strokeWidth="1.5" /></svg>
      </div>
      <div className="ml-[346px] flex w-[80px] flex-col items-center pt-[4px]">
        <div className="flex h-7 pl-[15px]">
          <svg width="25" height="28" viewBox="585 719 25 28" fill="#a3a3a3"><circle cx="593" cy="728" r="4.2" /><path d="M586 739Q586 733.5 593 733.5T600 739Q600 741 598 741H588Q586 741 586 739Z" /><circle cx="603" cy="729" r="3.7" /><path d="M601.5 735.5Q610 733 610 739Q610 741 608 741H601.5Q603 738 601.5 735.5Z" /></svg>
          <span className="ml-[2px] mt-[3px] leading-4">35</span>
        </div>
        <span className="tracking-[-0.45px]">Participants</span>
      </div>
      <div className="ml-[25px] flex w-[40px] flex-col items-center pt-[4px]">
        <svg width="22" height="28" viewBox="672 719 22 28"><path d="M676 723H690Q693 723 693 726V734Q693 737 690 737H682L677 741V737Q673 737 673 734V726Q673 723 676 723Z" fill="#a3a3a3" /></svg>
        <span>Chat</span>
      </div>
      <div className="ml-[29px] flex w-[80px] flex-col items-center whitespace-nowrap pt-[4px] text-[#23d959]">
        <svg width="24" height="28" viewBox="0 0 24 28"><rect y="4" width="24" height="18" rx="3" fill="#23d959" /><path d="M12 18V9M8 12.5L12 8.5L16 12.5" fill="none" stroke="#162118" strokeWidth="2" /></svg>
        <span className="tracking-[-0.35px]">Share Screen</span>
      </div>
      <div className="ml-[28px] flex w-[42px] flex-col items-center pt-[4px]">
        <svg width="22" height="28" viewBox="0 0 22 28"><circle cx="11" cy="13" r="9" fill="none" stroke="#a3a3a3" strokeWidth="1.5" /><circle cx="11" cy="13" r="6.5" fill="#a3a3a3" /></svg>
        <span>Record</span>
      </div>
      <button className="ml-auto mr-[12px] mt-[13px] h-[27px] w-[61px] rounded-[7px] bg-[#b82525] text-[12px] font-bold tracking-[-0.2px] text-white">Leave</button>
    </footer>
  );
}

function Overlays() {
  return (
    <>
      <div className="absolute left-[8px] top-[8px] flex h-6 w-6 items-center justify-center rounded-[5px] bg-[#090909]">
        <svg width="16" height="16" viewBox="0 0 16 16" fill="none" stroke="#a9a9a9" strokeWidth="1.2"><circle cx="8" cy="8" r="6.5" /><path d="M8 7V11.5M8 4.5V5.7" /></svg>
      </div>
      <div className="absolute left-[40px] top-[8px] flex h-6 w-6 items-center justify-center rounded-[5px] bg-[#151617]/95">
        <svg width="14" height="14" viewBox="0 0 14 14" fill="none" stroke="#d2d2d2" strokeWidth="1.2"><path d="M7 0.7Q9 2.5 12.5 2.7Q13.5 10 7 13.3Q0.5 10 1.5 2.7Q5 2.5 7 0.7ZM4 6.5L6.3 9L10.3 4.5" /></svg>
      </div>
      <div className="absolute left-[78px] top-[12px] flex h-4 items-center gap-[6px] text-[12px] tracking-[-0.4px] text-white">
        <svg width="12" height="12" viewBox="0 0 12 12"><circle cx="6" cy="6" r="5.6" fill="#cc3328" stroke="#c99e9d" strokeWidth="0.8" /><circle cx="5" cy="4.5" r="2.5" fill="#ed7465" /></svg>
        Recording...
      </div>
      <div className="absolute left-[157px] top-[8px] flex h-[27px] items-center">
        <div className="flex h-full w-[144px] items-center justify-center whitespace-nowrap rounded-l-[2px] bg-[#2d8cff] text-[12px] leading-[26px] tracking-[-0.3px] text-white">
          <span className="-mt-[2px]">Turn off Original Sound</span>
        </div>
        <div className="ml-px flex h-[27px] w-[17px] items-center justify-center rounded-r-[2px] bg-[#858a92]"><svg width="7" height="4" viewBox="0 0 7 4"><path d="M0 0H7L3.5 4Z" fill="#dadde1" /></svg></div>
      </div>
      <div className="absolute left-[496px] top-0 flex h-[22px] overflow-hidden rounded-b-[4px] text-[12px] font-semibold tracking-[-0.3px] shadow-[0_1px_2px_rgba(0,0,0,.25)]">
        <div className="flex w-[251px] items-center justify-center whitespace-nowrap bg-[#49c600] text-[#303d2b]">You are viewing sanjay rathore's screen</div>
        <div className="flex w-[121px] items-center gap-[5px] whitespace-nowrap bg-[#232425] pl-[29px] tracking-[-0.6px] text-white">View Options<svg width="7" height="5" viewBox="0 0 7 5"><path d="M0.5 0.7L3.5 3.7L6.5 0.7" fill="none" stroke="#ddd" strokeWidth="1.3" /></svg></div>
      </div>
    </>
  );
}

export default function App() {
  return (
    <main className="relative flex h-[768px] w-[1366px] flex-col overflow-hidden bg-[#1a1a1a] font-['Noto_Sans',sans-serif]">
      <div className="mx-[47px] flex h-[715px] w-[1272px] shrink-0 flex-col overflow-hidden">
        <TitleBar />
        <TabRow />
        <Ribbon />
        <div className="h-[5px] shrink-0 bg-[#c6cee0]" />
        <div className="flex h-[505px] shrink-0"><Canvas /><VScroll /></div>
        <HScroll />
        <StatusBar />
        <Taskbar />
      </div>
      <MeetingBar />
      <Overlays />
    </main>
  );
}
